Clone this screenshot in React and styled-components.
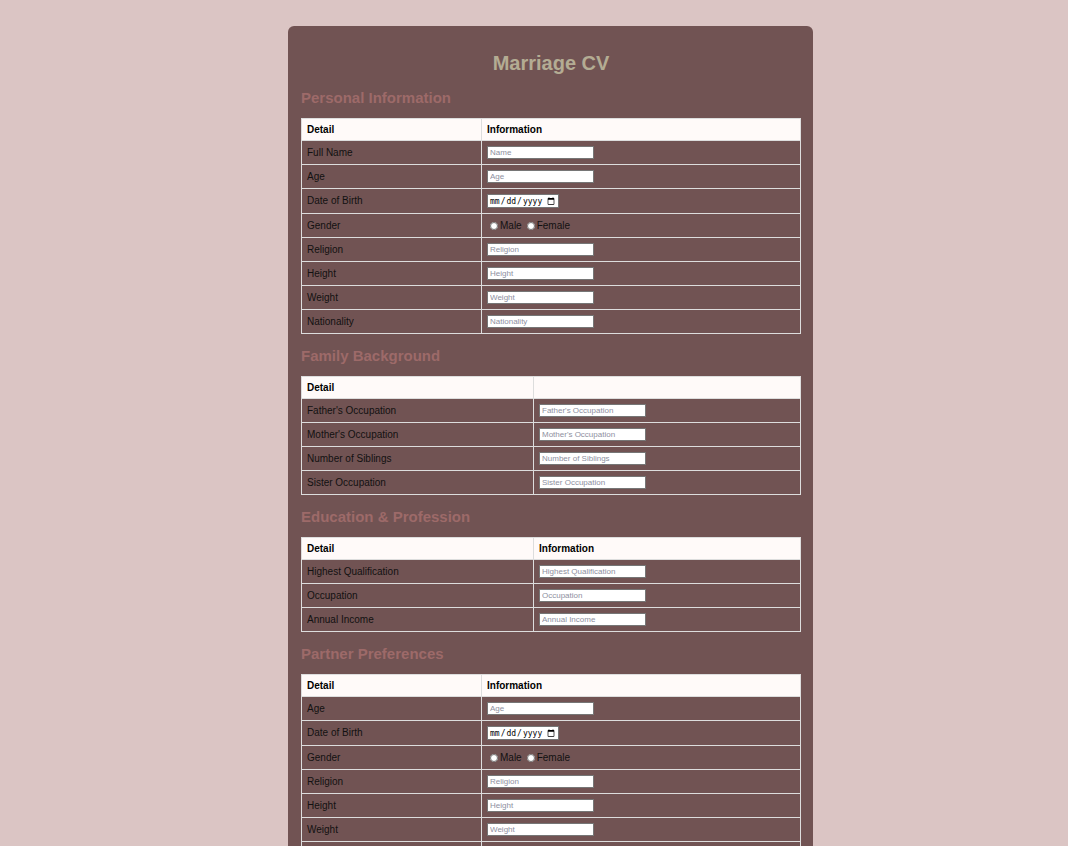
import React from 'react';
import styled, { createGlobalStyle } from 'styled-components';

const GlobalStyle = createGlobalStyle`
  body {
    margin: 0;
    background: #dbc5c4;
    font-family: "Liberation Sans", Arial, sans-serif;
  }
`;

const Page = styled.div`
  padding: 26px 0 40px 288px;
`;

const Card = styled.div`
  width: 500px;
  background: #715353;
  border-radius: 6px;
  padding: 26px 12px 24px 13px;
`;

const Title = styled.h1`
  margin: 0 0 14px;
  text-align: center;
  font-size: 20px;
  line-height: 23px;
  color: #b4ac93;
`;

const SectionTitle = styled.h2`
  margin: 13px 0 12px;
  font-size: 15px;
  line-height: 17px;
  color: #9d6a69;
`;

const Table = styled.table`
  width: 100%;
  border-collapse: collapse;
  border: 1px solid #ddd;
  font-size: 10px;
`;

const HeadCell = styled.th`
  text-align: left;
  background: #fffaf9;
  color: #000;
  font-weight: bold;
  padding: 5px 5px 4px;
  line-height: 12px;
  border: 1px solid #ddd;
  width: ${(p) => p.$width || 'auto'};
`;

const Cell = styled.td`
  color: #111;
  padding: 5px;
  line-height: 12px;
  border: 1px solid #ddd;
  vertical-align: middle;
`;

const TextInput = styled.input`
  display: block;
  box-sizing: border-box;
  width: 107px;
  height: 13px;
  margin: 0;
  padding: 0 2px;
  font-family: "Liberation Sans", Arial, sans-serif;
  font-size: 8px;
  border: 1px solid #767676;
  background: #fff;

  &::placeholder {
    color: #8e8fa0;
  }
`;

const DateInput = styled.input`
  display: block;
  box-sizing: border-box;
  width: 72px;
  height: 14px;
  margin: 0;
  padding: 0 1px;
  font-size: 8px;
  border: 1px solid #767676;
  background: #fff;
`;

const RadioGroup = styled.div`
  display: flex;
  align-items: center;
  gap: 2px;
  padding-left: 3px;
  color: #111;
  font-size: 10px;
  line-height: 12px;
  margin-top: 1px;
`;

const Radio = styled.input`
  width: 8px;
  height: 8px;
  margin: 0 2px 0 0;
`;

const RadioLabel = styled.label`
  display: flex;
  align-items: center;
  margin-right: 3px;
`;

function Field({ row }) {
  if (row.type === 'date') return <DateInput type="date" />;
  if (row.type === 'gender') {
    return (
      <RadioGroup>
        <RadioLabel><Radio type="radio" name={row.name} /> Male</RadioLabel>
        <RadioLabel><Radio type="radio" name={row.name} /> Female</RadioLabel>
      </RadioGroup>
    );
  }
  return <TextInput type="text" placeholder={row.placeholder} />;
}

function Section({ title, rows, firstCol, secondHead = 'Information' }) {
  return (
    <>
      <SectionTitle>{title}</SectionTitle>
      <Table>
        <thead>
          <tr>
            <HeadCell $width={firstCol}>Detail</HeadCell>
            <HeadCell>{secondHead}</HeadCell>
          </tr>
        </thead>
        <tbody>
          {rows.map((row) => (
            <tr key={row.label}>
              <Cell>{row.label}</Cell>
              <Cell><Field row={row} /></Cell>
            </tr>
          ))}
        </tbody>
      </Table>
    </>
  );
}

const personal = [
  { label: 'Full Name', placeholder: 'Name' },
  { label: 'Age', placeholder: 'Age' },
  { label: 'Date of Birth', type: 'date' },
  { label: 'Gender', type: 'gender', name: 'gender' },
  { label: 'Religion', placeholder: 'Religion' },
  { label: 'Height', placeholder: 'Height' },
  { label: 'Weight', placeholder: 'Weight' },
  { label: 'Nationality', placeholder: 'Nationality' },
];

const family = [
  { label: "Father's Occupation", placeholder: "Father's Occupation" },
  { label: "Mother's Occupation", placeholder: "Mother's Occupation" },
  { label: 'Number of Siblings', placeholder: 'Number of Siblings' },
  { label: 'Sister Occupation', placeholder: 'Sister Occupation' },
];

const education = [
  { label: 'Highest Qualification', placeholder: 'Highest Qualification' },
  { label: 'Occupation', placeholder: 'Occupation' },
  { label: 'Annual Income', placeholder: 'Annual Income' },
];

const partner = [
  { label: 'Age', placeholder: 'Age' },
  { label: 'Date of Birth', type: 'date' },
  { label: 'Gender', type: 'gender', name: 'pgender' },
  { label: 'Religion', placeholder: 'Religion' },
  { label: 'Height', placeholder: 'Height' },
  { label: 'Weight', placeholder: 'Weight' },
  { label: 'Nationality', placeholder: 'Nationality' },
];

export default function App() {
  return (
    <Page>
      <GlobalStyle />
      <Card>
        <Title>Marriage CV</Title>
        <Section title="Personal Information" rows={personal} firstCol="169px" />
        <Section title="Family Background" rows={family} firstCol="221px" secondHead="" />
        <Section title="Education & Profession" rows={education} firstCol="221px" />
        <Section title="Partner Preferences" rows={partner} firstCol="169px" />
      </Card>
    </Page>
  );
}
